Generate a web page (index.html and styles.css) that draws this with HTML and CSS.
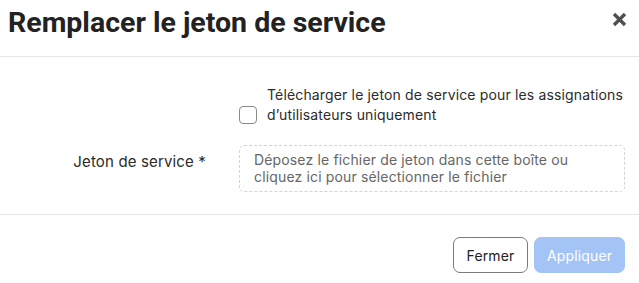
FILE: index.html
```html
<!DOCTYPE html>
<html lang="fr">
<head>
<meta charset="utf-8">
<link rel="stylesheet" href="styles.css">
</head>
<body>
<div class="dialog">
  <header class="head">
    <h1 class="title">Remplacer le jeton de service</h1>
    <button class="close" aria-label="Fermer">
      <svg width="15" height="15" viewBox="0 0 15 15"><path d="M2 2 L13 13 M13 2 L2 13" stroke="#4f4f4f" stroke-width="3.3" stroke-linecap="butt"/></svg>
    </button>
  </header>
  <section class="body">
    <div class="row row-check">
      <div class="lab"></div>
      <label class="check">
        <span class="box"></span>
        <span class="check-text">Télécharger le jeton de service pour les assignations d’utilisateurs uniquement</span>
      </label>
    </div>
    <div class="row row-file">
      <div class="lab">Jeton de service *</div>
      <div class="drop">Déposez le fichier de jeton dans cette boîte ou cliquez ici pour sélectionner le fichier</div>
    </div>
  </section>
  <footer class="foot">
    <button class="btn btn-close">Fermer</button>
    <button class="btn btn-apply">Appliquer</button>
  </footer>
</div>
</body>
</html>
```
FILE: styles.css
```css
* { box-sizing: border-box; }
html, body { margin: 0; padding: 0; background: #fff; }
body { font-family: Inter, "Noto Sans", sans-serif; color: #2b2b2b; width: 639px; height: 283px; overflow: hidden; }
.dialog { display: flex; flex-direction: column; }
.head {
  height: 57px;
  border-bottom: 1px solid #e6e6e6;
  display: flex;
  align-items: flex-start;
  justify-content: space-between;
  padding: 9px 12px 0 8px;
}
.title {
  margin: 0;
  font-family: Roboto, "Liberation Sans", sans-serif;
  font-weight: 700;
  font-size: 28.5px;
  line-height: 28.5px;
  color: #222;
}
.close { border: 0; background: none; padding: 0; width: 15px; height: 15px; margin-top: 3px; display: flex; }
.body { padding: 28px 14px 22px 0; display: flex; flex-direction: column; gap: 20px; border-bottom: 1px solid #e6e6e6; }
.row { display: grid; grid-template-columns: 239px 1fr; }
.row-check { align-items: end; }
.lab { font-size: 15px; line-height: 20px; letter-spacing: 0.15px; text-align: right; padding-right: 33px; color: #2b2b2b; }
.row-file { align-items: start; }
.row-file .lab { padding-top: 7px; }
.check { display: flex; align-items: flex-end; gap: 10px; font-size: 14px; line-height: 20px; letter-spacing: 0.15px; }
.box { flex: none; width: 18px; height: 18px; border: 1px solid #8a8a8a; border-radius: 4px; margin-bottom: 1px; }
.check-text { color: #2b2b2b; }
.drop {
  border: 1px dashed #cfd6db;
  border-radius: 5px;
  padding: 5px 14px 6px;
  font-size: 14px;
  line-height: 17px;
  letter-spacing: 0.15px;
  color: #666;
  height: 47px;
}
.foot { display: flex; justify-content: flex-end; gap: 6px; padding: 22px 14px 0 0; }
.btn {
  height: 36px;
  border-radius: 7px;
  font-family: Inter, "Noto Sans", sans-serif;
  font-size: 14px;
  letter-spacing: 0.15px;
  padding: 0;
}
.btn-close { width: 75px; background: #fff; border: 1px solid #7a7a7a; color: #222; }
.btn-apply { width: 91px; background: #a3c4f4; border: 1px solid #a3c4f4; color: #fff; }
```
